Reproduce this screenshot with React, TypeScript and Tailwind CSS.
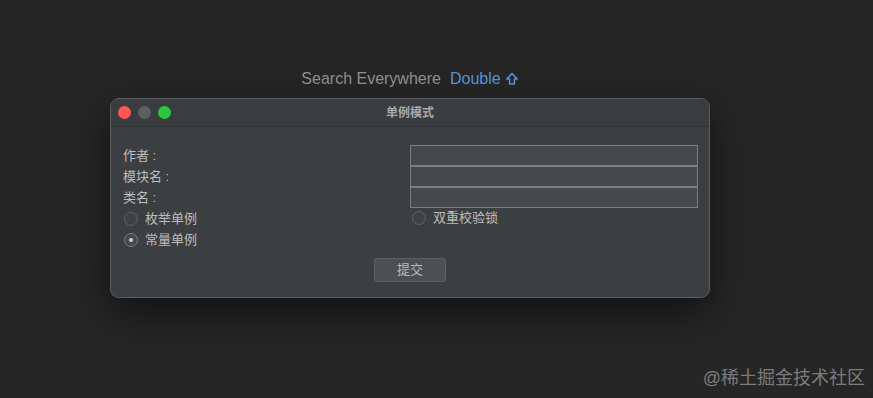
const font = "font-['Liberation_Sans','Noto_Sans_CJK_SC',sans-serif]";

function Radio({ label, checked }: { label: string; checked?: boolean }) {
  return (
    <label className="flex h-[21px] items-center gap-[7px] pl-[1px]">
      <span
        className={`flex h-[14px] w-[14px] items-center justify-center rounded-full border ${
          checked ? "border-[#7b7e80] bg-[#45494a]" : "border-[#5f6264] bg-[#3f4244]"
        }`}
      >
        {checked && <span className="h-[4px] w-[4px] rounded-full bg-[#cfcfcf]" />}
      </span>
      <span>{label}</span>
    </label>
  );
}

function Field() {
  return <div className="h-[21px] border border-[#7c7f80] bg-[#45494a]" />;
}

export default function App() {
  return (
    <div className={`relative h-[398px] w-[873px] overflow-hidden bg-[#262626] ${font}`}>
      <div className="ml-[110px] w-[600px] pt-[68px]">
        <div className="flex items-center justify-center gap-[9px] text-[16px] leading-[21px]">
          <span className="text-[#8e8e8e]">Search Everywhere</span>
          <span className="flex items-center gap-[4px] text-[#5b8fd6]">
            Double
            <svg width="14" height="14" viewBox="0 0 14 14" fill="none" stroke="currentColor" strokeWidth="1.6" strokeLinejoin="round">
              <path d="M7 1.5 L1.8 7 H4.6 V12 H9.4 V7 H12.2 Z" />
            </svg>
          </span>
        </div>

        <div className="mt-[9px] overflow-hidden rounded-[9px] border border-[#5b5d5f] bg-[#3c3f41] shadow-[0_14px_40px_rgba(0,0,0,0.55)]">
          <div className="relative flex h-[28px] items-center border-b border-[#2f3133] bg-[#3a3d3f] px-[7px]">
            <div className="flex gap-[7px]">
              <span className="h-[13px] w-[13px] rounded-full bg-[#fc5753]" />
              <span className="h-[13px] w-[13px] rounded-full bg-[#5c5e60]" />
              <span className="h-[13px] w-[13px] rounded-full bg-[#27c840]" />
            </div>
            <div className="absolute inset-0 flex items-center justify-center text-[12px] font-bold text-[#a9a9a9]">
              单例模式
            </div>
          </div>

          <div className="pb-[15px] pl-[12px] pr-[11px] pt-[18px] text-[13px] text-[#bdbdbd]">
            <div className="grid grid-cols-[287px_1fr]">
              <div className="flex flex-col">
                <div className="flex h-[21px] items-center">作者 :</div>
                <div className="flex h-[21px] items-center">模块名 :</div>
                <div className="flex h-[21px] items-center">类名 :</div>
                <Radio label="枚举单例" />
                <Radio label="常量单例" checked />
              </div>
              <div className="flex flex-col">
                <Field />
                <Field />
                <Field />
                <div className="-mt-[1px] pl-[1px]">
                  <Radio label="双重校验锁" />
                </div>
              </div>
            </div>
            <div className="mt-[8px] flex justify-center pr-[1px]">
              <button className="h-[24px] w-[72px] rounded-[3px] border border-[#5e6163] bg-[#4c5052] text-[13px] text-[#bbbbbb]">
                提交
              </button>
            </div>
          </div>
        </div>
      </div>

      <div className="absolute bottom-[6px] right-[8px] text-[18px] text-[#7c7c7c]">@稀土掘金技术社区</div>
    </div>
  );
}
